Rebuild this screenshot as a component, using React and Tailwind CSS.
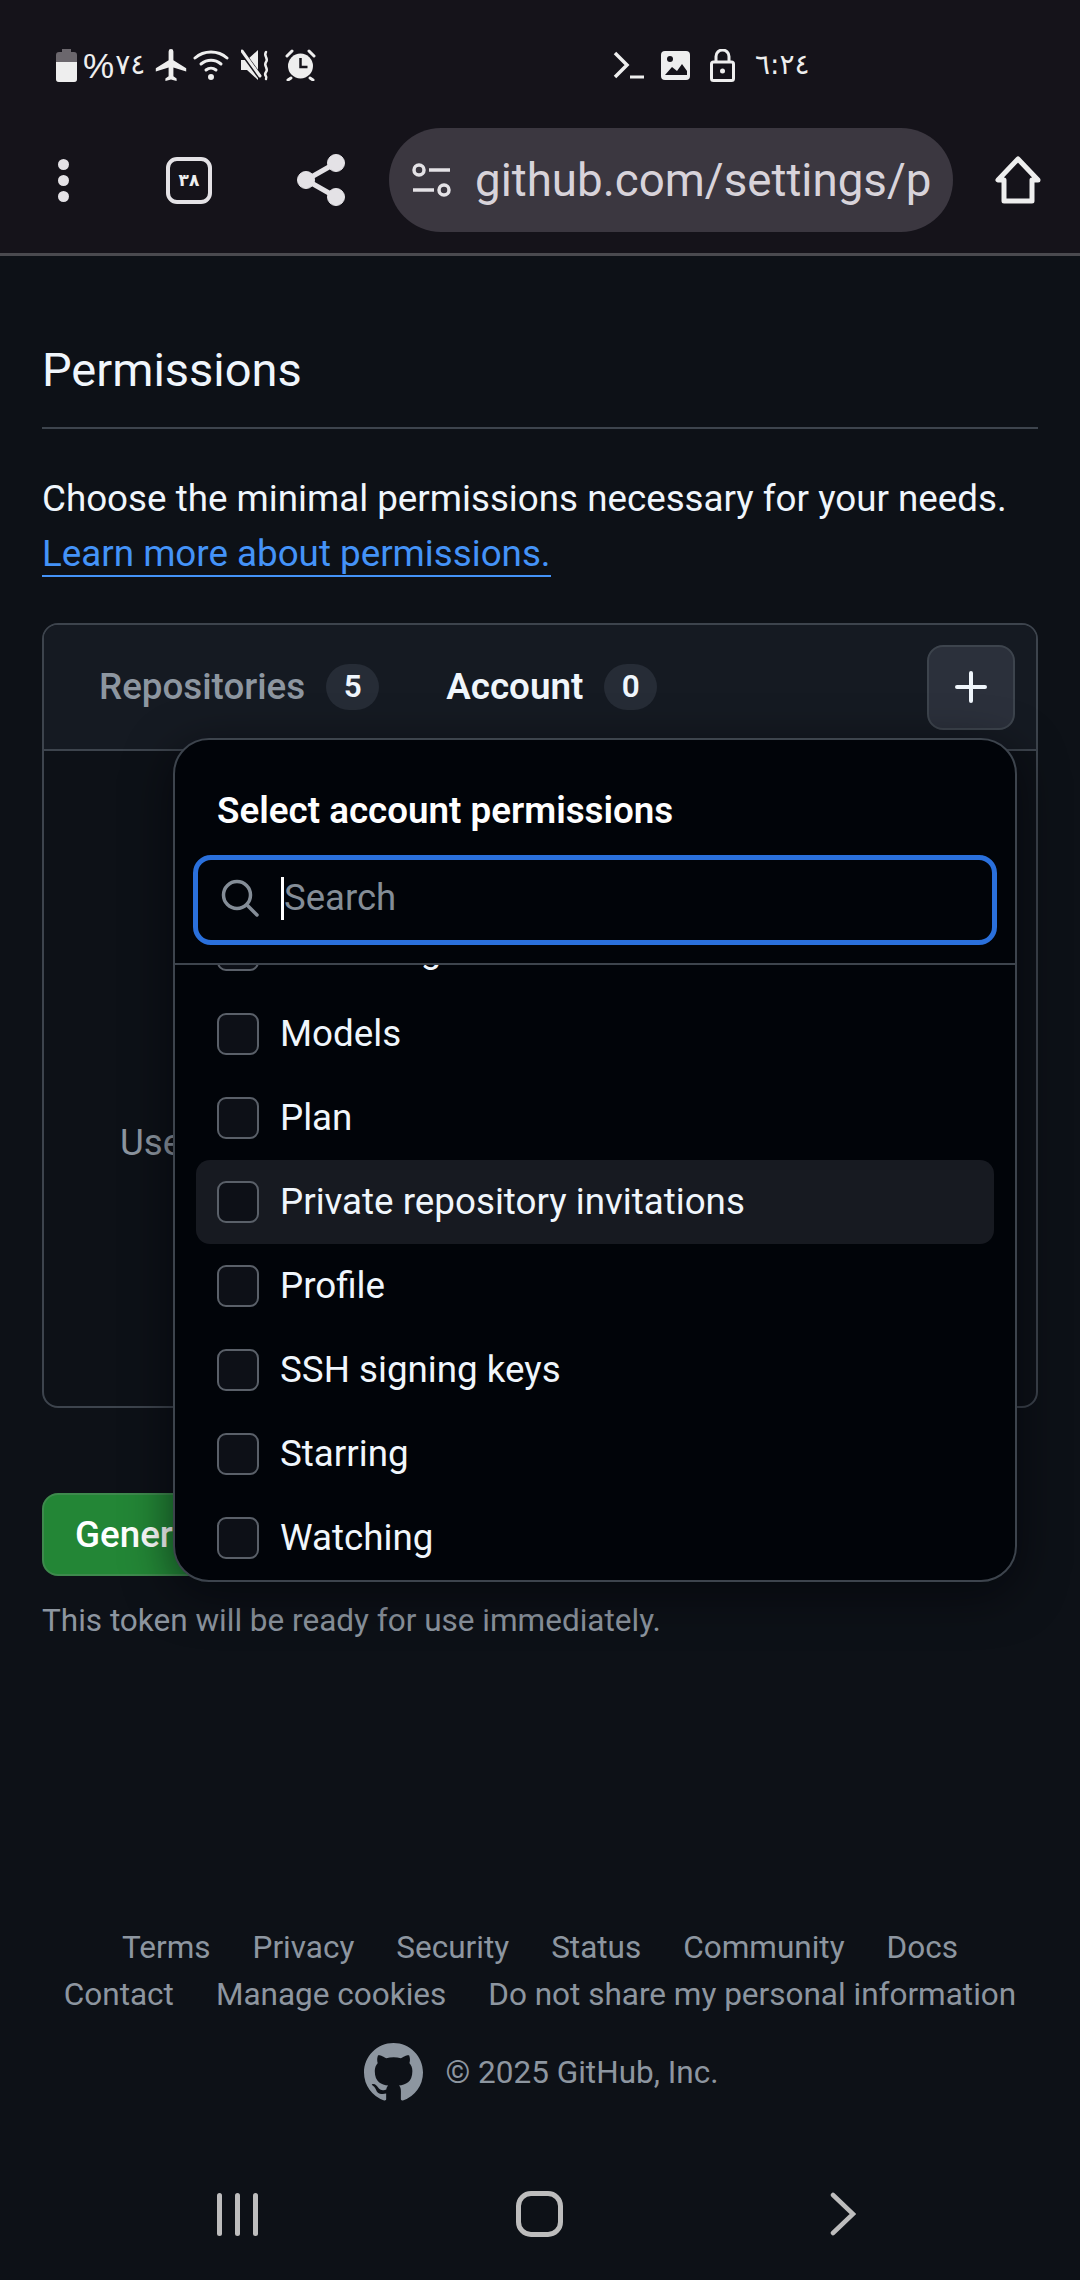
const rows = ['Knowledge bases', 'Models', 'Plan', 'Private repository invitations', 'Profile', 'SSH signing keys', 'Starring', 'Watching'];
const linksTop = ['Terms', 'Privacy', 'Security', 'Status', 'Community', 'Docs'];
const linksBottom = ['Contact', 'Manage cookies', 'Do not share my personal information'];

function StatusBar() {
  return (
    <div className="flex h-[128px] items-center pt-[2px] text-[#eeeeee]">
      <div className="ml-[56px] flex w-[557px] items-center">
        <svg width="21" height="33" viewBox="0 0 21 33" fill="none">
          <path d="M6 0h9v3h3a3 3 0 0 1 3 3v24a3 3 0 0 1-3 3H3a3 3 0 0 1-3-3V6a3 3 0 0 1 3-3h3z" fill="#6b676d" />
          <path d="M0 13h21v17a3 3 0 0 1-3 3H3a3 3 0 0 1-3-3z" fill="#eeeeee" />
        </svg>
        <span className="ml-[6px] font-['Liberation_Sans',sans-serif] text-[35px] leading-none">%</span>
        <span className="ml-[1px] font-['DejaVu_Sans',sans-serif] text-[28px] leading-none">٧٤</span>
        <svg className="ml-[10px]" width="32" height="32" viewBox="1.5 2 20 20" fill="currentColor">
          <path d="M21 16v-2l-8-5V3.5a1.5 1.5 0 0 0-3 0V9l-8 5v2l8-2.5V19l-2 1.5V22l3.5-1 3.5 1v-1.5L13 19v-5.5z" />
        </svg>
        <svg className="ml-[6px]" width="36" height="32" viewBox="0 0 36 32" fill="none" stroke="currentColor" strokeWidth="3" strokeLinecap="round">
          <path d="M2 9c9-8 23-8 32 0" />
          <path d="M8 15c6-5 14-5 20 0" />
          <path d="M13 21c3-2.500 7-2.500 10 0" />
          <circle cx="18" cy="28" r="1.500" fill="currentColor" />
        </svg>
        <svg className="ml-[12px]" width="30" height="32" viewBox="0 0 30 32" fill="none">
          <path d="M0 11h6L17 1v30L6 21H0z" fill="currentColor" />
          <path d="M1 3l19 26" stroke="#15131a" strokeWidth="5" />
          <path d="M1 2l18 25" stroke="currentColor" strokeWidth="3" strokeLinecap="round" />
          <path d="M25 3c-3 4 3 6 0 10s3 6 0 10 2 4 0 7" stroke="currentColor" strokeWidth="2.500" strokeLinecap="round" />
        </svg>
        <svg className="ml-[14px]" width="31" height="32" viewBox="0 0 31 32" fill="none">
          <circle cx="15.500" cy="17" r="12.500" fill="currentColor" />
          <path d="M15.500 9v9h7" stroke="#15131a" strokeWidth="2.500" />
          <path d="M2 7l5-5M29 7l-5-5M6 29l-3 2M25 29l3 2" stroke="currentColor" strokeWidth="3" strokeLinecap="round" />
        </svg>
      </div>
      <div className="flex items-center">
        <svg width="31" height="28" viewBox="0 0 31 28" fill="none" stroke="#eeeeee" strokeWidth="3.500">
          <path d="M2 2l12 12L2 26" />
          <path d="M17 26h14" strokeWidth="3" />
        </svg>
        <svg className="ml-[17px]" width="29" height="29" viewBox="0 0 29 29">
          <rect width="29" height="29" rx="4" fill="#eeeeee" />
          <circle cx="9" cy="8" r="3" fill="#15131a" />
          <path d="M4 24l7-8 5 4 5-7 5 7v4z" fill="#15131a" />
        </svg>
        <svg className="ml-[20px]" width="25" height="33" viewBox="0 0 25 33" fill="none" stroke="#eeeeee" strokeWidth="3">
          <rect x="1.500" y="13" width="22" height="18.500" rx="2" />
          <path d="M6 13V7.500a6.500 6.500 0 0 1 13 0V13" />
          <circle cx="12.500" cy="22" r="2.500" fill="#eeeeee" stroke="none" />
        </svg>
        <span dir="ltr" className="ml-[20px] font-['DejaVu_Sans',sans-serif] text-[28px] leading-none">٦:٢٤</span>
      </div>
    </div>
  );
}

function Toolbar() {
  return (
    <div className="flex h-[104px] items-center text-[#eeeeee]">
      <div className="ml-[58px] flex w-[11px] flex-col gap-[5px]">
        <span className="h-[11px] w-[11px] rounded-full bg-[#e4e2e6]" />
        <span className="h-[11px] w-[11px] rounded-full bg-[#e4e2e6]" />
        <span className="h-[11px] w-[11px] rounded-full bg-[#e4e2e6]" />
      </div>
      <div className="ml-[97px] flex h-[47px] w-[46px] items-center justify-center rounded-[11px] border-[4px] border-[#e4e2e6] font-['DejaVu_Sans',sans-serif] text-[17px] font-bold leading-none">
        ٣٨
      </div>
      <svg className="ml-[85px]" width="48" height="52" viewBox="0 0 48 52" fill="#e4e2e6" stroke="#e4e2e6">
        <circle cx="39" cy="9" r="8.500" />
        <circle cx="39" cy="43" r="8.500" />
        <circle cx="9" cy="26" r="8.500" />
        <path d="M39 9L9 26l30 17" fill="none" strokeWidth="5" />
      </svg>
      <div className="ml-[44px] flex h-[104px] w-[564px] items-center overflow-hidden rounded-full bg-[#3b3740]">
        <svg className="ml-[23px] shrink-0" width="39" height="34" viewBox="0 0 39 34" fill="none" stroke="#e4e2e6" strokeWidth="3.500">
          <circle cx="7" cy="7" r="5" />
          <path d="M17 7h21" />
          <path d="M1 27h21" />
          <circle cx="32" cy="27" r="5" />
        </svg>
        <span className="ml-[24px] whitespace-nowrap pt-[2px] text-[45.7px] leading-none text-[#d8d3da]">github.com/settings/p</span>
      </div>
      <svg className="ml-[42px]" width="46" height="48" viewBox="0 0 46 48" fill="none" stroke="#eeeeee" strokeWidth="5" strokeLinejoin="round">
        <path d="M23 3L3 24h6v21h28V24h6z" />
      </svg>
    </div>
  );
}

function Dropdown() {
  return (
    <div className="absolute left-[129px] top-[113px] flex h-[844px] w-[844px] flex-col overflow-hidden rounded-[36px] border-[2px] border-[#3d444d] bg-[#010409] shadow-[0_12px_48px_rgba(1,4,9,0.6)]">
      <div className="shrink-0 border-b-[2px] border-[#3d444d]">
        <div className="pl-[42px] pt-[46px] text-[36.75px] font-semibold leading-[50px] text-white">Select account permissions</div>
        <div className="mx-[18px] mb-[18px] mt-[19px] flex h-[90px] items-center rounded-[18px] border-[5px] border-[#2a70dc] pb-[4px] pl-[23px]">
          <svg width="38" height="38" viewBox="0 0 38 38" fill="none" stroke="#848d97" strokeWidth="3.500" strokeLinecap="round">
            <circle cx="16" cy="16" r="13.500" />
            <path d="M26 26l10 10" />
          </svg>
          <span className="ml-[22px] h-[43px] w-[3px] bg-white" />
          <span className="text-[36.5px] leading-none text-[#848d97]">Search</span>
        </div>
      </div>
      <div className="flex min-h-0 flex-1 flex-col justify-end overflow-hidden px-[21px]">
        {rows.map((label) => (
          <div
            key={label}
            className={`flex h-[84px] shrink-0 items-center gap-[21px] rounded-[14px] pl-[21px] ${label === 'Private repository invitations' ? 'bg-[#171a21]' : ''}`}
          >
            <span className="h-[42px] w-[42px] shrink-0 rounded-[9px] border-[2px] border-[#5a6069] bg-[#0d1017]" />
            <span className="text-[36.75px] leading-none text-[#f0f6fc]">{label}</span>
          </div>
        ))}
      </div>
    </div>
  );
}

export default function App() {
  return (
    <div className="flex h-[2280px] w-[1080px] flex-col overflow-hidden bg-[#0d1117] font-[Roboto,sans-serif]">
      <header className="h-[256px] shrink-0 border-b-[3px] border-[#4a4a4f] bg-[#15131a]">
        <StatusBar />
        <Toolbar />
      </header>

      <main className="px-[42px]">
        <h2 className="mt-[84px] border-b-[2px] border-[#3d444d] pb-[27px] text-[47px] leading-[60px] text-[#f0f6fc]">Permissions</h2>
        <p className="mt-[42px] text-[36.75px] leading-[55px] text-[#f0f6fc]">
          Choose the minimal permissions necessary for your needs.
          <br />
          <span className="border-b-[2px] border-[#4493f8] text-[#4493f8]">Learn more about permissions.</span>
        </p>

        <div className="relative mt-[42px] h-[785px] rounded-[16px] border-[2px] border-[#3d444d]">
          <div className="flex h-[126px] items-center rounded-t-[14px] border-b-[2px] border-[#3d444d] bg-[#151a22] pl-[55px] pr-[21px]">
            <span className="text-[36.75px] font-medium text-[#8d96a0]">Repositories</span>
            <span className="ml-[21px] flex h-[46px] w-[53px] items-center justify-center rounded-full bg-[#262c36] text-[31.5px] font-semibold text-[#f0f6fc]">5</span>
            <span className="ml-[67px] text-[36.75px] font-semibold text-[#f0f6fc]">Account</span>
            <span className="ml-[21px] flex h-[46px] w-[53px] items-center justify-center rounded-full bg-[#262c36] text-[31.5px] font-semibold text-[#f0f6fc]">0</span>
            <button className="ml-auto flex h-[85px] w-[88px] items-center justify-center rounded-[16px] border-[2px] border-[#3d444d] bg-[#2b303b]">
              <svg width="32" height="32" viewBox="0 0 32 32" stroke="#f0f6fc" strokeWidth="4" strokeLinecap="round">
                <path d="M16 2v28M2 16h28" />
              </svg>
            </button>
          </div>
          <div className="flex h-[655px] items-center pl-[76px] pt-[128px] text-[36.75px] text-[#8d96a0]">Use</div>
          <Dropdown />
        </div>

        <button className="mt-[85px] flex h-[83px] w-[420px] items-center rounded-[16px] border-[2px] border-[#3e8a4d] bg-[#238636] pl-[31px] text-[36.75px] font-medium text-white">
          Generate token
        </button>
        <p className="mt-[21px] text-[31.5px] leading-[48px] text-[#8d96a0]">This token will be ready for use immediately.</p>
      </main>

      <footer className="mt-[279px] flex flex-col items-center text-[31.5px] leading-[47px] text-[#8d96a0]">
        <div className="flex gap-[42px]">
          {linksTop.map((link) => <span key={link}>{link}</span>)}
        </div>
        <div className="flex gap-[42px]">
          {linksBottom.map((link) => <span key={link}>{link}</span>)}
        </div>
        <div className="ml-[2px] mt-[25px] flex items-center gap-[23px]">
          <svg className="h-[59px] w-[59px]" viewBox="0 0 16 16" fill="currentColor">
            <path d="M8 0c4.42 0 8 3.58 8 8a8.013 8.013 0 0 1-5.45 7.59c-.4.08-.55-.17-.55-.38 0-.27.01-1.13.01-2.2 0-.75-.25-1.23-.54-1.48 1.78-.2 3.65-.88 3.65-3.95 0-.88-.31-1.59-.82-2.15.08-.2.36-1.02-.08-2.12 0 0-.67-.22-2.2.82-.64-.18-1.32-.27-2-.27-.68 0-1.36.09-2 .27-1.53-1.03-2.2-.82-2.2-.82-.44 1.1-.16 1.92-.08 2.12-.51.56-.82 1.28-.82 2.15 0 3.06 1.86 3.75 3.64 3.95-.23.2-.44.55-.51 1.07-.46.21-1.61.55-2.33-.66-.15-.24-.6-.83-1.23-.82-.67.01-.27.38.01.53.34.19.73.9.82 1.13.16.45.68 1.31 2.69.94 0 .67.01 1.3.01 1.49 0 .21-.15.45-.55.38A7.995 7.995 0 0 1 0 8c0-4.42 3.58-8 8-8Z" />
          </svg>
          <span>© 2025 GitHub, Inc.</span>
        </div>
      </footer>

      <nav className="mt-[87px] flex h-[50px] items-center">
        <div className="ml-[217px] flex gap-[13px]">
          <span className="h-[43px] w-[5px] rounded-full bg-[#bdbdbd]" />
          <span className="h-[43px] w-[5px] rounded-full bg-[#bdbdbd]" />
          <span className="h-[43px] w-[5px] rounded-full bg-[#bdbdbd]" />
        </div>
        <span className="ml-[258px] h-[46px] w-[47px] rounded-[15px] border-[5px] border-[#bdbdbd]" />
        <svg className="ml-[267px]" width="26" height="44" viewBox="0 0 26 44" fill="none" stroke="#bdbdbd" strokeWidth="4.500" strokeLinecap="round">
          <path d="M3 3l20 19L3 41" />
        </svg>
      </nav>
    </div>
  );
}
